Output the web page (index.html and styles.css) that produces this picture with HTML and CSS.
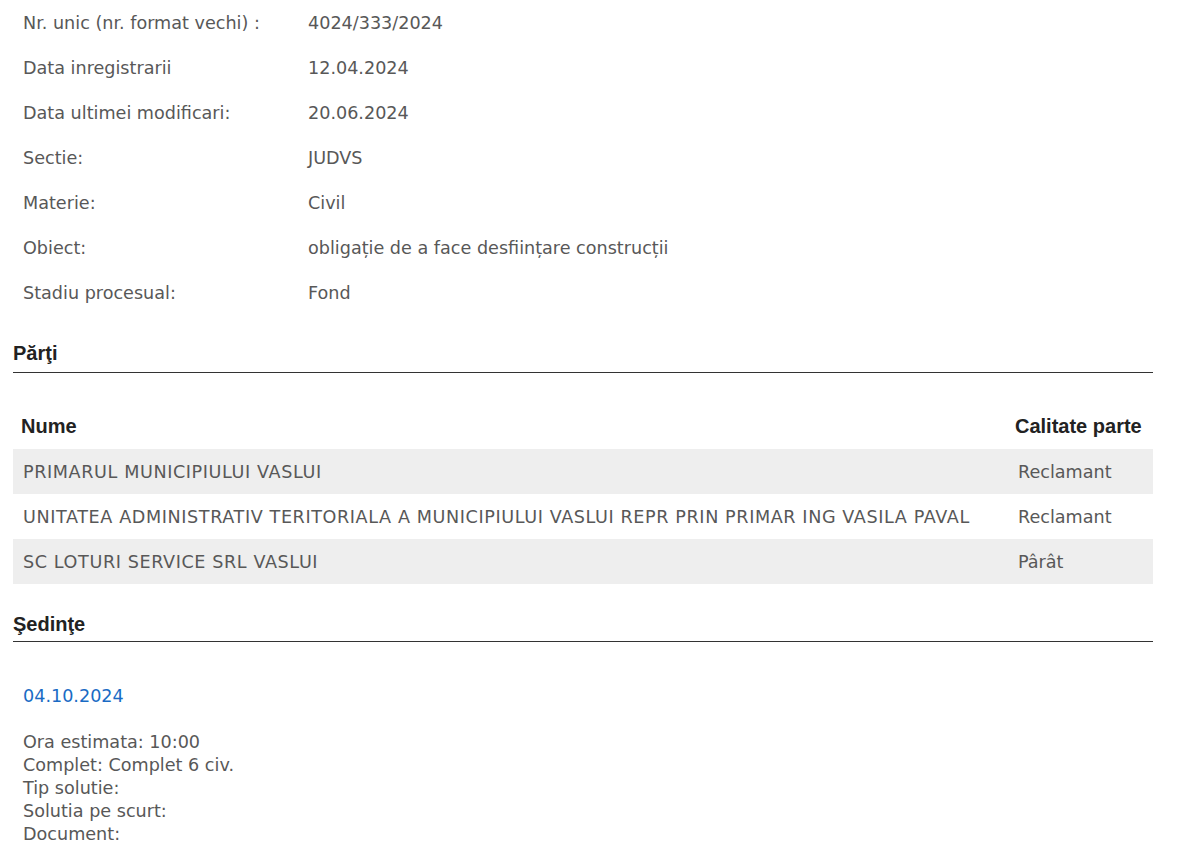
FILE: index.html
```html
<!DOCTYPE html>
<html lang="ro">
<head>
    <meta charset="UTF-8">
    <title>Dosar</title>
    <link rel="stylesheet" href="styles.css">
</head>
<body>
    <div class="dosar">
        <table class="detalii">
            <tr><td class="eticheta">Nr. unic (nr. format vechi) :</td><td>4024/333/2024</td></tr>
            <tr><td class="eticheta">Data inregistrarii</td><td>12.04.2024</td></tr>
            <tr><td class="eticheta">Data ultimei modificari:</td><td>20.06.2024</td></tr>
            <tr><td class="eticheta">Sectie:</td><td>JUDVS</td></tr>
            <tr><td class="eticheta">Materie:</td><td>Civil</td></tr>
            <tr><td class="eticheta">Obiect:</td><td>obligație de a face desființare construcții</td></tr>
            <tr><td class="eticheta">Stadiu procesual:</td><td>Fond</td></tr>
        </table>

        <h2 class="titlu">Părţi</h2>
        <table class="parti">
            <thead>
                <tr><th>Nume</th><th class="calitate">Calitate parte</th></tr>
            </thead>
            <tbody>
                <tr class="impar"><td class="nume">PRIMARUL MUNICIPIULUI VASLUI</td><td class="calitate">Reclamant</td></tr>
                <tr><td class="nume">UNITATEA ADMINISTRATIV TERITORIALA A MUNICIPIULUI VASLUI REPR PRIN PRIMAR ING VASILA PAVAL</td><td class="calitate">Reclamant</td></tr>
                <tr class="impar"><td class="nume">SC LOTURI SERVICE SRL VASLUI</td><td class="calitate">Pârât</td></tr>
            </tbody>
        </table>

        <h2 class="titlu titlu-sedinte">Şedinţe</h2>
        <div class="sedinta">
            <div class="data">04.10.2024</div>
            <div class="info">
                Ora estimata: 10:00<br>
                Complet: Complet 6 civ.<br>
                Tip solutie:<br>
                Solutia pe scurt:<br>
                Document:
            </div>
        </div>
    </div>
</body>
</html>
```

FILE: styles.css
```css
* {
    margin: 0;
    padding: 0;
    box-sizing: border-box;
}

body {
    font-family: "DejaVu Sans", sans-serif;
    font-size: 17.6px;
    color: #585858;
    background: #fff;
}

.dosar {
    width: 1140px;
    margin-left: 13px;
}

.detalii {
    border-collapse: collapse;
}

.detalii td {
    height: 45px;
    padding: 0 10px;
    vertical-align: middle;
}

.detalii .eticheta {
    width: 285px;
}

/* Titluri sectiuni */
.titlu {
    font-family: "Liberation Sans", Arial, sans-serif;
    font-size: 20px;
    font-weight: bold;
    color: #222;
    border-bottom: 1px solid #333;
    padding-bottom: 7px;
}

.detalii + .titlu {
    margin-top: 27px;
}

.titlu-sedinte {
    padding-bottom: 5px;
}

.parti {
    width: 100%;
    border-collapse: collapse;
    margin-top: 31px;
    margin-bottom: 29px;
}

.parti th {
    font-family: "Liberation Sans", Arial, sans-serif;
    font-size: 20px;
    color: #222;
    text-align: left;
    height: 45px;
    padding: 0 8px;
}

.parti td {
    height: 45px;
    padding: 0 10px;
}

.parti td.nume {
    letter-spacing: 0.6px;
}

.parti th.calitate {
    width: 140px;
    padding-left: 2px;
}

.parti td.calitate {
    padding-left: 5px;
}

.parti .impar td {
    background: #eee;
}

.sedinta {
    padding: 44px 10px 0;
}

.sedinta .data {
    color: #1a6bc4;
    margin-bottom: 25px;
}

.sedinta .info {
    line-height: 23px;
}
```
